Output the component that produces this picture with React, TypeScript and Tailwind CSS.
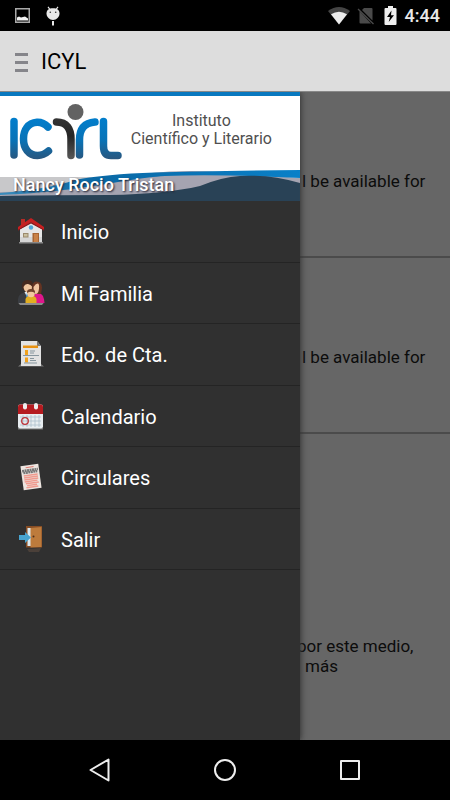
import type { ReactNode } from "react";

const ROBOTO = "font-[Roboto,'Liberation_Sans',sans-serif]";

function StatusBar() {
  return (
    <div className="flex h-[31px] shrink-0 items-center bg-black pr-[10px] pl-[15px] text-[#e8e8e8]">
      <svg width="15" height="15" viewBox="0 0 15 15" aria-hidden="true">
        <rect x=".75" y=".75" width="13.5" height="13.5" fill="none" stroke="#a9a9a9" strokeWidth="1.5" />
        <path d="M2 12.5V9.5L4 8.500l2 1L8 9l2-.5 3 2v2z" fill="#f2f2f2" />
      </svg>
      <svg className="ml-4" width="14" height="20" viewBox="0 0 14 20" aria-hidden="true">
        <path d="M2 .8 4 3.5M12 .8 10 3.5" stroke="#e8e8e8" strokeWidth="1.2" />
        <path d="M.5 7.5C.5 4 3 2.3 7 2.3s6.500 1.700 6.500 5.200S10.500 14 7 14 .5 11 .5 7.500z" fill="#e8e8e8" />
        <circle cx="4.300" cy="6.300" r=".8" fill="#333" />
        <circle cx="9.700" cy="6.300" r=".8" fill="#333" />
        <path d="M7 15v4.500" stroke="#e8e8e8" strokeWidth="2" />
      </svg>
      <svg className="ml-auto" width="22" height="18" viewBox="0 0 22 18" aria-hidden="true">
        <path d="M0 4Q11-4 22 4L11 17.500z" fill="#444" />
        <path d="M3 7.300Q11 2.200 19 7.300L11 17.500z" fill="#ededed" />
      </svg>
      <svg className="ml-[7px]" width="18" height="18" viewBox="0 0 18 18" aria-hidden="true">
        <path d="M7 1h7.500q1 0 1 1v11.500L5 3zM2.500 4 14 16.500H3.500q-1 0-1-1z" fill="#4a4a4a" />
        <path d="M1 2 16.500 17" stroke="#4a4a4a" strokeWidth="1.300" />
      </svg>
      <svg className="ml-[9px]" width="13" height="19" viewBox="0 0 13 19" aria-hidden="true">
        <path d="M4 0h5v2h2.500q1 0 1 1v15q0 1-1 1h-10q-1 0-1-1V3q0-1 1-1H4z" fill="#efefef" />
        <path d="M7.500 4.500 3 11h3l-1.300 5L10 9.200H7z" fill="#000" />
      </svg>
      <time className="ml-[8px] pt-px text-[18px] leading-[22px] font-medium">4:44</time>
    </div>
  );
}

function SchoolBanner() {
  return (
    <div className="relative h-[109px] overflow-hidden bg-white">
      <svg className="absolute inset-0 h-full w-full" viewBox="0 0 300 109" preserveAspectRatio="none" aria-hidden="true">
        <defs>
          <linearGradient id="blue" gradientUnits="userSpaceOnUse" x1="0" y1="28" x2="0" y2="68">
            <stop offset="0" stopColor="#027dca" />
            <stop offset=".5" stopColor="#0873b7" />
            <stop offset="1" stopColor="#2a557c" />
          </linearGradient>
          <linearGradient id="dark" gradientUnits="userSpaceOnUse" x1="0" y1="28" x2="0" y2="68">
            <stop offset="0" stopColor="#333" />
            <stop offset=".4" stopColor="#252525" />
            <stop offset="1" stopColor="#5a5a5a" />
          </linearGradient>
          <linearGradient id="wave" x1="0" y1="0" x2="1" y2="0">
            <stop offset="0" stopColor="#3a8dbd" />
            <stop offset=".3" stopColor="#0a68a4" />
            <stop offset="1" stopColor="#0a80c8" />
          </linearGradient>
        </defs>
        <path d="M0 0H300V4H0z" fill="#0878bf" />
        <g fill="none" stroke="url(#blue)" strokeWidth="7.500" strokeLinecap="round">
          <path d="M14 29.500V63" />
          <path d="M48 35Q43 30 37 30.300C28 31 23.500 38 23.500 47s5 16.500 14 16.500q6 0 11-4.500" />
          <path d="M79.500 63V48C79.500 37 84 31 95 30" />
          <path d="M103.500 29.500V54Q103.500 63.500 111 63.500H118" />
        </g>
        <path d="M56.500 30C67 30 71 37 71 47V63.500" fill="none" stroke="url(#dark)" strokeWidth="7.500" strokeLinecap="round" />
        <circle cx="75.500" cy="20" r="8" fill="#626262" />
        <path d="M0 85H92L60 98 0 103z" fill="#c8c8ca" />
        <path d="M0 100Q60 100 110 88T220 80L300 86V109H0z" fill="#a5a4b1" />
        <path d="M0 101Q50 97 75 88Q105 82 155 80.500T300 78V86Q220 82 165 84C120 87 90 99 0 103z" fill="url(#wave)" />
        <path d="M0 104Q60 103 110 103Q165 102 200 94Q222 85 240 84Q270 82 300 91V109H0z" fill="#294256" />
      </svg>
      <div className="relative flex h-full flex-col justify-between pt-5 pr-[28px] pb-[6px] pl-[13px]">
        <div className="ml-auto text-center text-[16px] leading-[18px] text-[#505050]">
          <p>Instituto</p>
          <p>Científico y Literario</p>
        </div>
        <p className="text-[18px] leading-5 font-medium text-white [text-shadow:1px_1px_2px_#223]">Nancy Rocio Tristan</p>
      </div>
    </div>
  );
}

function Icon({ children }: { children: ReactNode }) {
  return (
    <svg className="shrink-0" width="28" height="28" viewBox="0 0 28 28" aria-hidden="true">
      {children}
    </svg>
  );
}

const items: { label: string; icon: ReactNode }[] = [
  {
    label: "Inicio",
    icon: (
      <Icon>
        <path d="M2 25h24v1.500H2z" fill="#888" />
        <path d="M3 12 14 4l11 8v13H3z" fill="#e6e6e6" />
        <path d="M3 20h22v5H3z" fill="#d6d6d6" />
        <path d="M4 2h4v6H4z" fill="#b72a25" />
        <path d="M14 1 27 10v3.500L14 5.500 1 13.500V10z" fill="#c61f20" />
        <path d="M1 12.700 14 5l13 7.700v.8L14 6.500 1 13.500z" fill="#7d1518" />
        <circle cx="14" cy="10.500" r="2.200" fill="#4fa7d8" />
        <path d="M6 16h5.500v4.500H6z" fill="#9b8a6d" />
        <path d="M7 17h3.500v2.500H7z" fill="#c9bf9f" />
        <path d="M15.500 16H22v9h-6.500z" fill="#a76432" />
        <path d="M17 17h4v8h-4z" fill="#c98147" />
      </Icon>
    ),
  },
  {
    label: "Mi Familia",
    icon: (
      <Icon>
        <path d="M1 23.500h26l-2 2.500H3z" fill="#8b8b8b" />
        <path d="M1 24Q0 15 7 13.500h6l3 10.500z" fill="#3a3d42" />
        <path d="M7.500 13h5.500l-2 7z" fill="#e1edf5" />
        <path d="m10 14 1.500 1-.5 5-2-3z" fill="#3b8ed0" />
        <path d="M5 9Q4 1 10.500 1T16 8l-1 3H6z" fill="#45281d" />
        <path d="M6.500 8Q8 4.500 11 5t4 2.500Q15 13 11 13.500 7 13 6.500 8z" fill="#efc49d" />
        <path d="M17 24v-8q1-2.500 4-2.500 6 1 6.500 10.500z" fill="#df178b" />
        <path d="M15.500 12Q14 2.500 19.500 2.500 25 2.500 25 9l-1 6h-6z" fill="#653422" />
        <path d="M16.500 8q2-3.500 4-3.500t1.500 5-3 5.500-2.500-7z" fill="#f0c4a0" />
        <path d="M8.500 24v-4q1-3.500 5.500-3.500t5.500 3.500v4z" fill="#e2ae21" />
        <circle cx="14" cy="14.500" r="3.800" fill="#f1c89d" />
        <path d="M10 14q-.5-4 4-4t4 4q-4-2.500-8 0" fill="#70432c" />
      </Icon>
    ),
  },
  {
    label: "Edo. de Cta.",
    icon: (
      <Icon>
        <path d="M1 26.500 4 24h20l3 2.500z" fill="#777" />
        <path d="M4 1h16l4 5v20H4z" fill="#e2e2e2" />
        <path d="M20 1v5h4z" fill="#777" />
        <path d="M6 5.500h15V8H6z" fill="#e89213" />
        <path d="M8 10h3v5H8zM8 17.500h3v5H8z" fill="#f1a11b" />
        <path d="M13 11h5M13 13h4M6 15.500h16M13 18.500h4M13 20.500h6M7 23h13" stroke="#87969e" />
      </Icon>
    ),
  },
  {
    label: "Calendario",
    icon: (
      <Icon>
        <path d="M1 26h25v1.500H1z" fill="#777" />
        <rect x="1" y="2.500" width="25" height="24" rx="2" fill="#e8edf0" />
        <path d="M1 12V4.500q0-2 2-2h21q2 0 2 2V12z" fill="#b51b20" />
        <path d="M3 15h21M3 19h21M3 23h21M6 13v12M10 13v12M14 13v12M18 13v12M22 13v12" stroke="#adc0cd" strokeWidth=".8" />
        <rect x="6" y="1" width="4" height="6.500" rx="2" fill="#eee" />
        <rect x="17" y="1" width="4" height="6.500" rx="2" fill="#eee" />
        <circle cx="8" cy="19" r="3.300" fill="none" stroke="#bd3237" strokeWidth="1.300" />
      </Icon>
    ),
  },
  {
    label: "Circulares",
    icon: (
      <Icon>
        <g transform="rotate(-8 14 14)">
          <path d="M5 2h18v24H5z" fill="#ede5e0" />
          <path d="M10 4h8" stroke="#dc7b71" />
          <path d="M6 7h16M7 9h14" stroke="#777" strokeWidth="2.500" strokeDasharray="2 .5" />
          <path d="M7 12h14M7 14h14M7 16h14M7 18h13M8 20h13M9 22h10M8 24h12" stroke="#f09a8e" strokeWidth="1.400" />
        </g>
      </Icon>
    ),
  },
  {
    label: "Salir",
    icon: (
      <Icon>
        <path d="m10 24 14-1-2 4H12z" fill="#4b4039" />
        <path d="M9 1h16v21.500H9z" fill="#874d24" />
        <path d="M10.500 3H14v18h-3.500z" fill="#dceaf0" />
        <path d="m13.500 3 11-1v20l-11 .5z" fill="#bd7b3c" />
        <circle cx="16.500" cy="11.500" r="1" fill="#52301b" />
        <path d="M2 10h6V7l6 5.500L8 18v-3H2z" fill="#48a4cf" />
      </Icon>
    ),
  },
];

function Drawer() {
  return (
    <aside className="relative z-10 w-2/3 shrink-0 bg-[#303030] shadow-[1px_0_6px_#333]">
      <SchoolBanner />
      <nav>
        <ul className="grid h-[369px] grid-rows-6">
          {items.map((item) => (
            <li key={item.label} className="border-b border-[#242424]">
              <a href="#" className="flex h-full items-center gap-4 pl-[17px] text-[20px] text-white">
                {item.icon}
                <span className="pt-0.5">{item.label}</span>
              </a>
            </li>
          ))}
        </ul>
      </nav>
    </aside>
  );
}

export default function App() {
  return (
    <div className={`flex h-screen flex-col overflow-hidden bg-black ${ROBOTO}`}>
      <StatusBar />
      <header className="flex h-[60px] shrink-0 items-center gap-[13px] bg-[#dddddd] pl-[15px]">
        <button type="button" aria-label="Menu" className="flex w-[13px] flex-col gap-[5px] pt-0.5">
          <span className="h-[3px] w-full bg-[#85858a]" />
          <span className="h-[3px] w-full bg-[#85858a]" />
          <span className="h-[3px] w-full bg-[#85858a]" />
        </button>
        <h1 className="pt-0.5 text-[22px] leading-7 text-black">ICYL</h1>
      </header>
      <div className="flex min-h-0 flex-1 overflow-hidden border-t border-[#888] bg-[#666]">
        <Drawer />
        <main className="-ml-1 flex flex-1 flex-col text-[17px] leading-5 text-[#0c0c0c]">
          <article className="h-[166px] border-b-2 border-[#4b4b4b] pt-[79px] pl-[6px]">l be available for</article>
          <article className="h-[176px] border-b-2 border-[#4b4b4b] pt-[89px] pl-[6px]">l be available for</article>
          <article className="flex-1 pt-[202px] pl-px">
            <p>por este medio,</p>
            <p className="pl-2">más</p>
          </article>
        </main>
      </div>
      <nav aria-label="System" className="flex h-[60px] shrink-0 items-center justify-center gap-[101px]">
        <button type="button" aria-label="Back">
          <svg width="24" height="26" viewBox="0 0 24 26" fill="none" stroke="#eee" strokeWidth="2" strokeLinejoin="round">
            <path d="M20.500 2.500v21L2.500 13z" />
          </svg>
        </button>
        <button type="button" aria-label="Home">
          <svg width="24" height="24" viewBox="0 0 24 24" fill="none" stroke="#eee" strokeWidth="2">
            <circle cx="12" cy="12" r="10" />
          </svg>
        </button>
        <button type="button" aria-label="Recent apps">
          <svg width="24" height="24" viewBox="0 0 24 24" fill="none" stroke="#eee" strokeWidth="2" strokeLinejoin="round">
            <path d="M3 3h18v18H3z" />
          </svg>
        </button>
      </nav>
    </div>
  );
}
